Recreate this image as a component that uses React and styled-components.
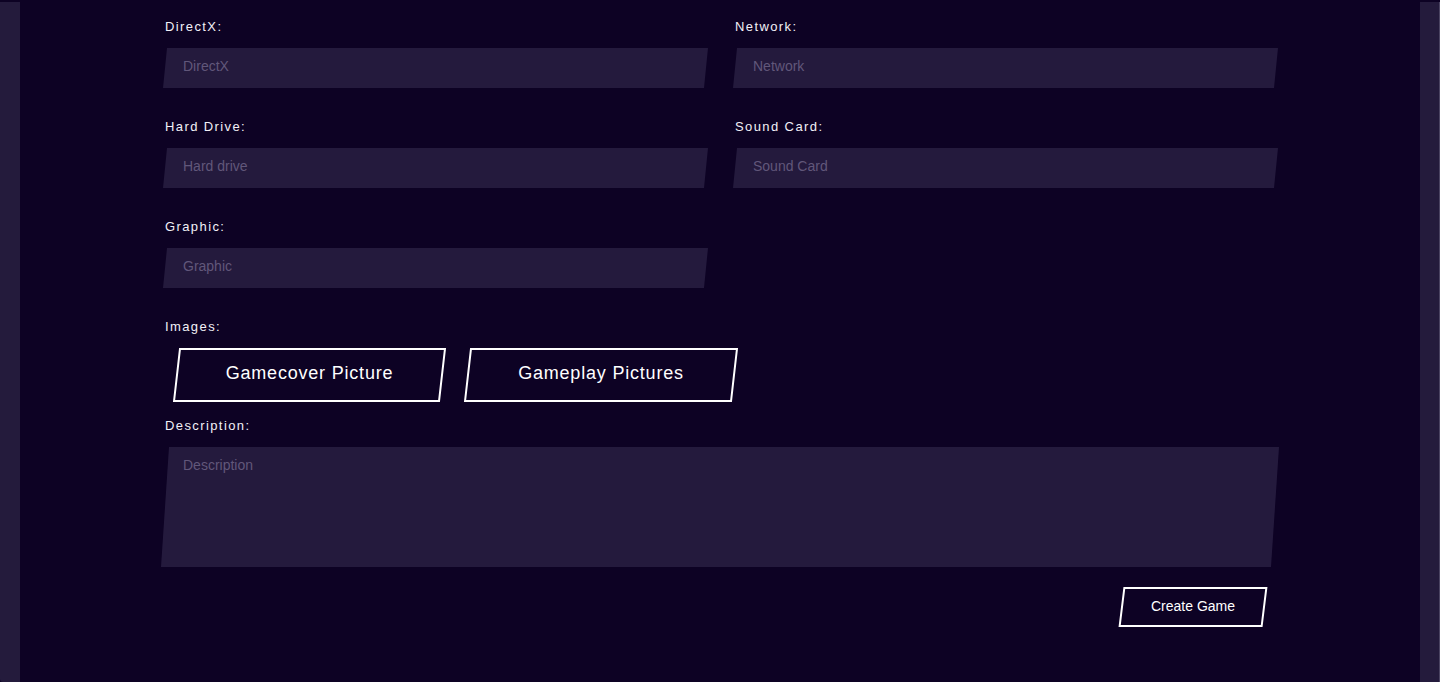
import React from "react";
import styled, { createGlobalStyle } from "styled-components";

const Global = createGlobalStyle`
  html, body { margin: 0; padding: 0; height: 100%; overflow: hidden; background: #0d0224; }
  body { font-family: "Liberation Sans", Arial, sans-serif; }
  * { box-sizing: border-box; }
`;

const Frame = styled.div`
  margin-top: 2px;
  height: 680px;
  display: flex;
  padding: 0 19px 0 20px;
  background: #241b3c;
  border-right: 1px solid #4b4462;
  border-bottom-left-radius: 3px;
`;

const Panel = styled.main`
  flex: 1;
  background: #0d0224;
  padding: 16px 0 0 143px;
`;

const Form = styled.form`
  width: 1116px;
  display: flex;
  flex-direction: column;
`;

const Grid = styled.div`
  display: grid;
  grid-template-columns: 545px 545px;
  column-gap: 25px;
  row-gap: 30px;
`;

const Field = styled.div`
  display: flex;
  flex-direction: column;
  gap: 13px;
`;

const Label = styled.label`
  display: block;
  font-size: 13px;
  line-height: 16px;
  padding-top: 1px;
  letter-spacing: 1.4px;
  color: #f2f0f7;
  padding-left: 2px;
  margin-top: ${(p) => p.$mt || 0}px;
`;

const Input = styled.input`
  height: 40px;
  width: 100%;
  border: none;
  outline: none;
  background: #241a3d;
  color: #e0dcea;
  font-family: "Liberation Sans", Arial, sans-serif;
  font-size: 14px;
  padding: 0 0 4px 20px;
  clip-path: polygon(4px 0, 100% 0, calc(100% - 4px) 100%, 0 100%);
  &::placeholder { color: #61577a; }
`;

const TextArea = styled.textarea`
  display: block;
  margin: 13px 0 0 -2px;
  width: 1118px;
  height: 120px;
  border: none;
  outline: none;
  resize: none;
  background: #241a3d;
  color: #e0dcea;
  font-family: "Liberation Sans", Arial, sans-serif;
  font-size: 14px;
  padding: 10px 0 0 22px;
  clip-path: polygon(8px 0, 100% 0, calc(100% - 8px) 100%, 0 100%);
  &::placeholder { color: #61577a; }
`;

const ButtonRow = styled.div`
  display: flex;
  gap: 24px;
  padding-left: 13px;
  margin-top: 13px;
`;

const SkewButton = styled.button`
  position: relative;
  width: ${(p) => p.$w}px;
  height: ${(p) => p.$h}px;
  background: transparent;
  border: none;
  color: #ffffff;
  font-family: "Liberation Sans", Arial, sans-serif;
  font-size: ${(p) => p.$fs}px;
  letter-spacing: ${(p) => p.$ls || 0}px;
  cursor: pointer;
  padding: 0 0 3px;
  &::before {
    content: "";
    position: absolute;
    inset: 0;
    border: 2px solid #ffffff;
    transform: skewX(${(p) => p.$skew}deg);
  }
`;

const Actions = styled.div`
  display: flex;
  justify-content: flex-end;
  padding-right: 14px;
  margin-top: 20px;
`;

const fields = [
  ["DirectX:", "DirectX"],
  ["Network:", "Network"],
  ["Hard Drive:", "Hard drive"],
  ["Sound Card:", "Sound Card"],
  ["Graphic:", "Graphic"],
];

export default function App() {
  return (
    <>
      <Global />
      <Frame>
        <Panel>
          <Form onSubmit={(e) => e.preventDefault()}>
            <Grid>
              {fields.map(([label, ph]) => (
                <Field key={label}>
                  <Label>{label}</Label>
                  <Input placeholder={ph} />
                </Field>
              ))}
            </Grid>
            <Label $mt={30}>Images:</Label>
            <ButtonRow>
              <SkewButton type="button" $w={267} $h={54} $fs={18} $ls={0.8} $skew={-6.5}>
                Gamecover Picture
              </SkewButton>
              <SkewButton type="button" $w={268} $h={54} $fs={18} $ls={0.8} $skew={-6.5}>
                Gameplay Pictures
              </SkewButton>
            </ButtonRow>
            <Label $mt={15}>Description:</Label>
            <TextArea placeholder="Description" />
            <Actions>
              <SkewButton type="submit" $w={144} $h={40} $fs={14} $skew={-7}>
                Create Game
              </SkewButton>
            </Actions>
          </Form>
        </Panel>
      </Frame>
    </>
  );
}
